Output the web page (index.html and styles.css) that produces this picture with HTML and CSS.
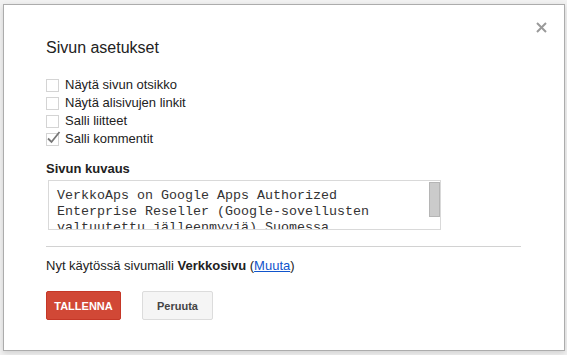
FILE: index.html
```html
<!DOCTYPE html>
<html lang="fi">
<head>
<meta charset="utf-8">
<title>Sivun asetukset</title>
<link rel="stylesheet" href="styles.css">
</head>
<body>
<div class="dialog">
  <span class="close" aria-label="Sulje">
    <svg width="11" height="11" viewBox="0 0 11 11"><path d="M1 1L10 10M10 1L1 10" stroke="#9a9a9a" stroke-width="2" fill="none"/></svg>
  </span>
  <h1 class="title">Sivun asetukset</h1>
  <ul class="options">
    <li class="option"><span class="box"></span>Näytä sivun otsikko</li>
    <li class="option"><span class="box"></span>Näytä alisivujen linkit</li>
    <li class="option"><span class="box"></span>Salli liitteet</li>
    <li class="option"><span class="box checked"><svg class="tick" width="16" height="16" viewBox="0 0 16 16"><path d="M2 9.5L5.5 13L13.5 3" stroke="#777" stroke-width="1.8" fill="none"/></svg></span>Salli kommentit</li>
  </ul>
  <div class="label">Sivun kuvaus</div>
  <div class="desc-wrap">
    <textarea class="desc" readonly>VerkkoAps on Google Apps Authorized Enterprise Reseller (Google-sovellusten valtuutettu jälleenmyyjä) Suomessa. Autamme yrityksiä siirtymään pilvipalveluihin ja tarjoamme koulutusta sekä tukea.</textarea>
    <div class="scroll"><div class="thumb"></div></div>
  </div>
  <div class="rule"></div>
  <p class="template">Nyt käytössä sivumalli <b>Verkkosivu</b> (<a href="#">Muuta</a>)</p>
  <div class="buttons">
    <button class="btn primary">TALLENNA</button>
    <button class="btn secondary">Peruuta</button>
  </div>
</div>
</body>
</html>
```
FILE: styles.css
```css
html, body {
  margin: 0;
  padding: 0;
  background: #f2f2f2;
}
body {
  padding: 4px 3px;
  font-family: Arial, "Liberation Sans", sans-serif;
  color: #222;
}
.dialog {
  position: relative;
  box-sizing: border-box;
  width: 562px;
  height: 347px;
  background: #fff;
  border: 1px solid #acacac;
  box-shadow: 0 2px 6px rgba(0,0,0,0.15);
  padding: 33px 42px 0 42px;
}
.close {
  position: absolute;
  top: 17px;
  right: 17px;
  width: 11px;
  height: 11px;
  display: block;
}
.close svg { display: block; }
.title {
  margin: 0;
  font-size: 16px;
  font-weight: normal;
  line-height: 20px;
  color: #222;
}
.options {
  list-style: none;
  margin: 18px 0 0 0;
  padding: 0;
}
.option {
  display: flex;
  align-items: center;
  height: 18px;
  font-size: 13px;
  line-height: 18px;
}
.box {
  position: relative;
  box-sizing: border-box;
  width: 13px;
  height: 13px;
  border: 1px solid #d4d4d4;
  margin: 1px 6px 0 0;
  flex: none;
}
.tick {
  position: absolute;
  left: -1px;
  top: -5px;
}
.label {
  margin-top: 13px;
  font-size: 13px;
  font-weight: bold;
  line-height: 16px;
}
.desc-wrap {
  display: flex;
  box-sizing: border-box;
  margin: 3px 0 0 2px;
  width: 393px;
  height: 50px;
  border: 1px solid #d9d9d9;
  overflow: hidden;
}
.desc {
  flex: 1;
  display: block;
  box-sizing: border-box;
  margin: 0;
  height: 48px;
  border: 0;
  padding: 7px 30px 0 8px;
  font-family: "Courier New", "Liberation Mono", monospace;
  font-size: 13.33px;
  line-height: 16px;
  color: #333;
  resize: none;
  overflow: hidden;
  outline: none;
  background: #fff;
}
.scroll {
  flex: none;
  width: 11px;
  padding-top: 1px;
}
.thumb {
  box-sizing: border-box;
  width: 11px;
  height: 35px;
  background: #cbcbcb;
  border: 1px solid #b5b5b5;
}
.rule {
  margin-top: 16px;
  width: 475px;
  height: 1px;
  background: #d2d2d2;
}
.template {
  margin: 10px 0 0 0;
  font-size: 13px;
  line-height: 18px;
}
.template b { color: #222; }
.template a { color: #15c; }
.buttons {
  display: flex;
  gap: 21px;
  margin-top: 16px;
}
.btn {
  box-sizing: border-box;
  height: 29px;
  border-radius: 2px;
  font-family: Arial, "Liberation Sans", sans-serif;
  font-size: 11px;
  font-weight: bold;
  padding: 0;
  text-align: center;
}
.primary {
  width: 75px;
  background: #d14836;
  border: 1px solid #c53727;
  color: #fff;
}
.secondary {
  width: 71px;
  background: #f5f5f5;
  border: 1px solid #dcdcdc;
  color: #444;
}
```
